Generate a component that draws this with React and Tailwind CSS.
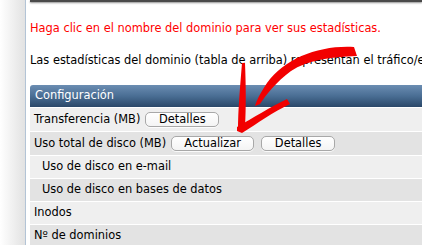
import React from "react";

const font = { fontFamily: '"DejaVu Sans", Verdana, sans-serif' };

const Btn = ({ children, w }) => (
  <span
    className={`inline-flex items-center justify-center h-[15px] ${w} rounded-[5px] border border-[#a8a8a8] bg-gradient-to-b from-white to-[#f4f4f4] text-[11.4px] leading-none text-black shadow-[0_1px_0_rgba(255,255,255,0.8)]`}
  >
    {children}
  </span>
);

const Row = ({ children, dark, tall, indent }) => (
  <div
    className={`flex items-center gap-[5px] border-t border-white ${tall ? "h-[24px]" : "h-[23px]"} ${dark ? "bg-[#e3e3e3]" : "bg-[#efefef]"} ${indent ? "pl-[12px]" : "pl-[4px]"}`}
  >
    {children}
  </div>
);

const Arrow = () => (
  <svg className="absolute left-0 top-0 pointer-events-none" width="422" height="245" viewBox="0 0 422 245">
    <g fill="#f20000">
      <path d="M354 47 C320 45 285 58 267 83 C261 92 257 99 255 106 L260 104 C266 95 276 82 291 71 C307 60 331 57 357 56 Z" />
      <path d="M242 63 L245 63 C246 88 246 108 245 126 L238 131 C238 110 240 88 242 63 Z" />
      <path d="M237 127 C253 118 270 107 287 99 L290 104 C273 112 258 123 242 133 L237 131 Z" />
    </g>
  </svg>
);

export default function App() {
  return (
    <div className="relative flex w-[422px] h-[245px] overflow-hidden bg-white" style={font}>
      <div className="w-[25px] shrink-0 bg-gradient-to-r from-white to-[#e2e2e2]" />
      <div className="w-[1px] shrink-0 bg-[#b3c4d6]" />
      <div className="flex-1 min-w-0 pl-[4px]">
        <div className="h-[2px] bg-[#4a4a4a] shadow-[0_1px_2px_rgba(0,0,0,0.45)]" />
        <p className="mt-[19px] text-[11.4px] leading-[14px] text-[#ff0000] whitespace-nowrap">
          Haga clic en el nombre del dominio para ver sus estadísticas.
        </p>
        <p className="mt-[18px] text-[11.4px] leading-[14px] text-black whitespace-nowrap">
          Las estadísticas del dominio (tabla de arriba) representan el tráfico/espacio
        </p>
        <div className="mt-[18px] w-[420px] text-[11.4px] text-black">
          <div className="flex items-center h-[22px] pl-[5px] rounded-tl-[3px] bg-gradient-to-b from-[#6b8db2] via-[#4a6e94] to-[#2b4869] text-white">
            Configuración
          </div>
          <Row tall>
            <span>Transferencia (MB)</span>
            <Btn w="w-[74px]">Detalles</Btn>
          </Row>
          <Row tall dark>
            <span>Uso total de disco (MB)</span>
            <Btn w="w-[83px]">Actualizar</Btn>
            <span className="ml-[2px] flex">
              <Btn w="w-[74px]">Detalles</Btn>
            </span>
          </Row>
          <Row indent>
            <span>Uso de disco en e-mail</span>
          </Row>
          <Row indent dark>
            <span>Uso de disco en bases de datos</span>
          </Row>
          <Row>
            <span>Inodos</span>
          </Row>
          <Row dark>
            <span>Nº de dominios</span>
          </Row>
        </div>
      </div>
      <Arrow />
    </div>
  );
}
